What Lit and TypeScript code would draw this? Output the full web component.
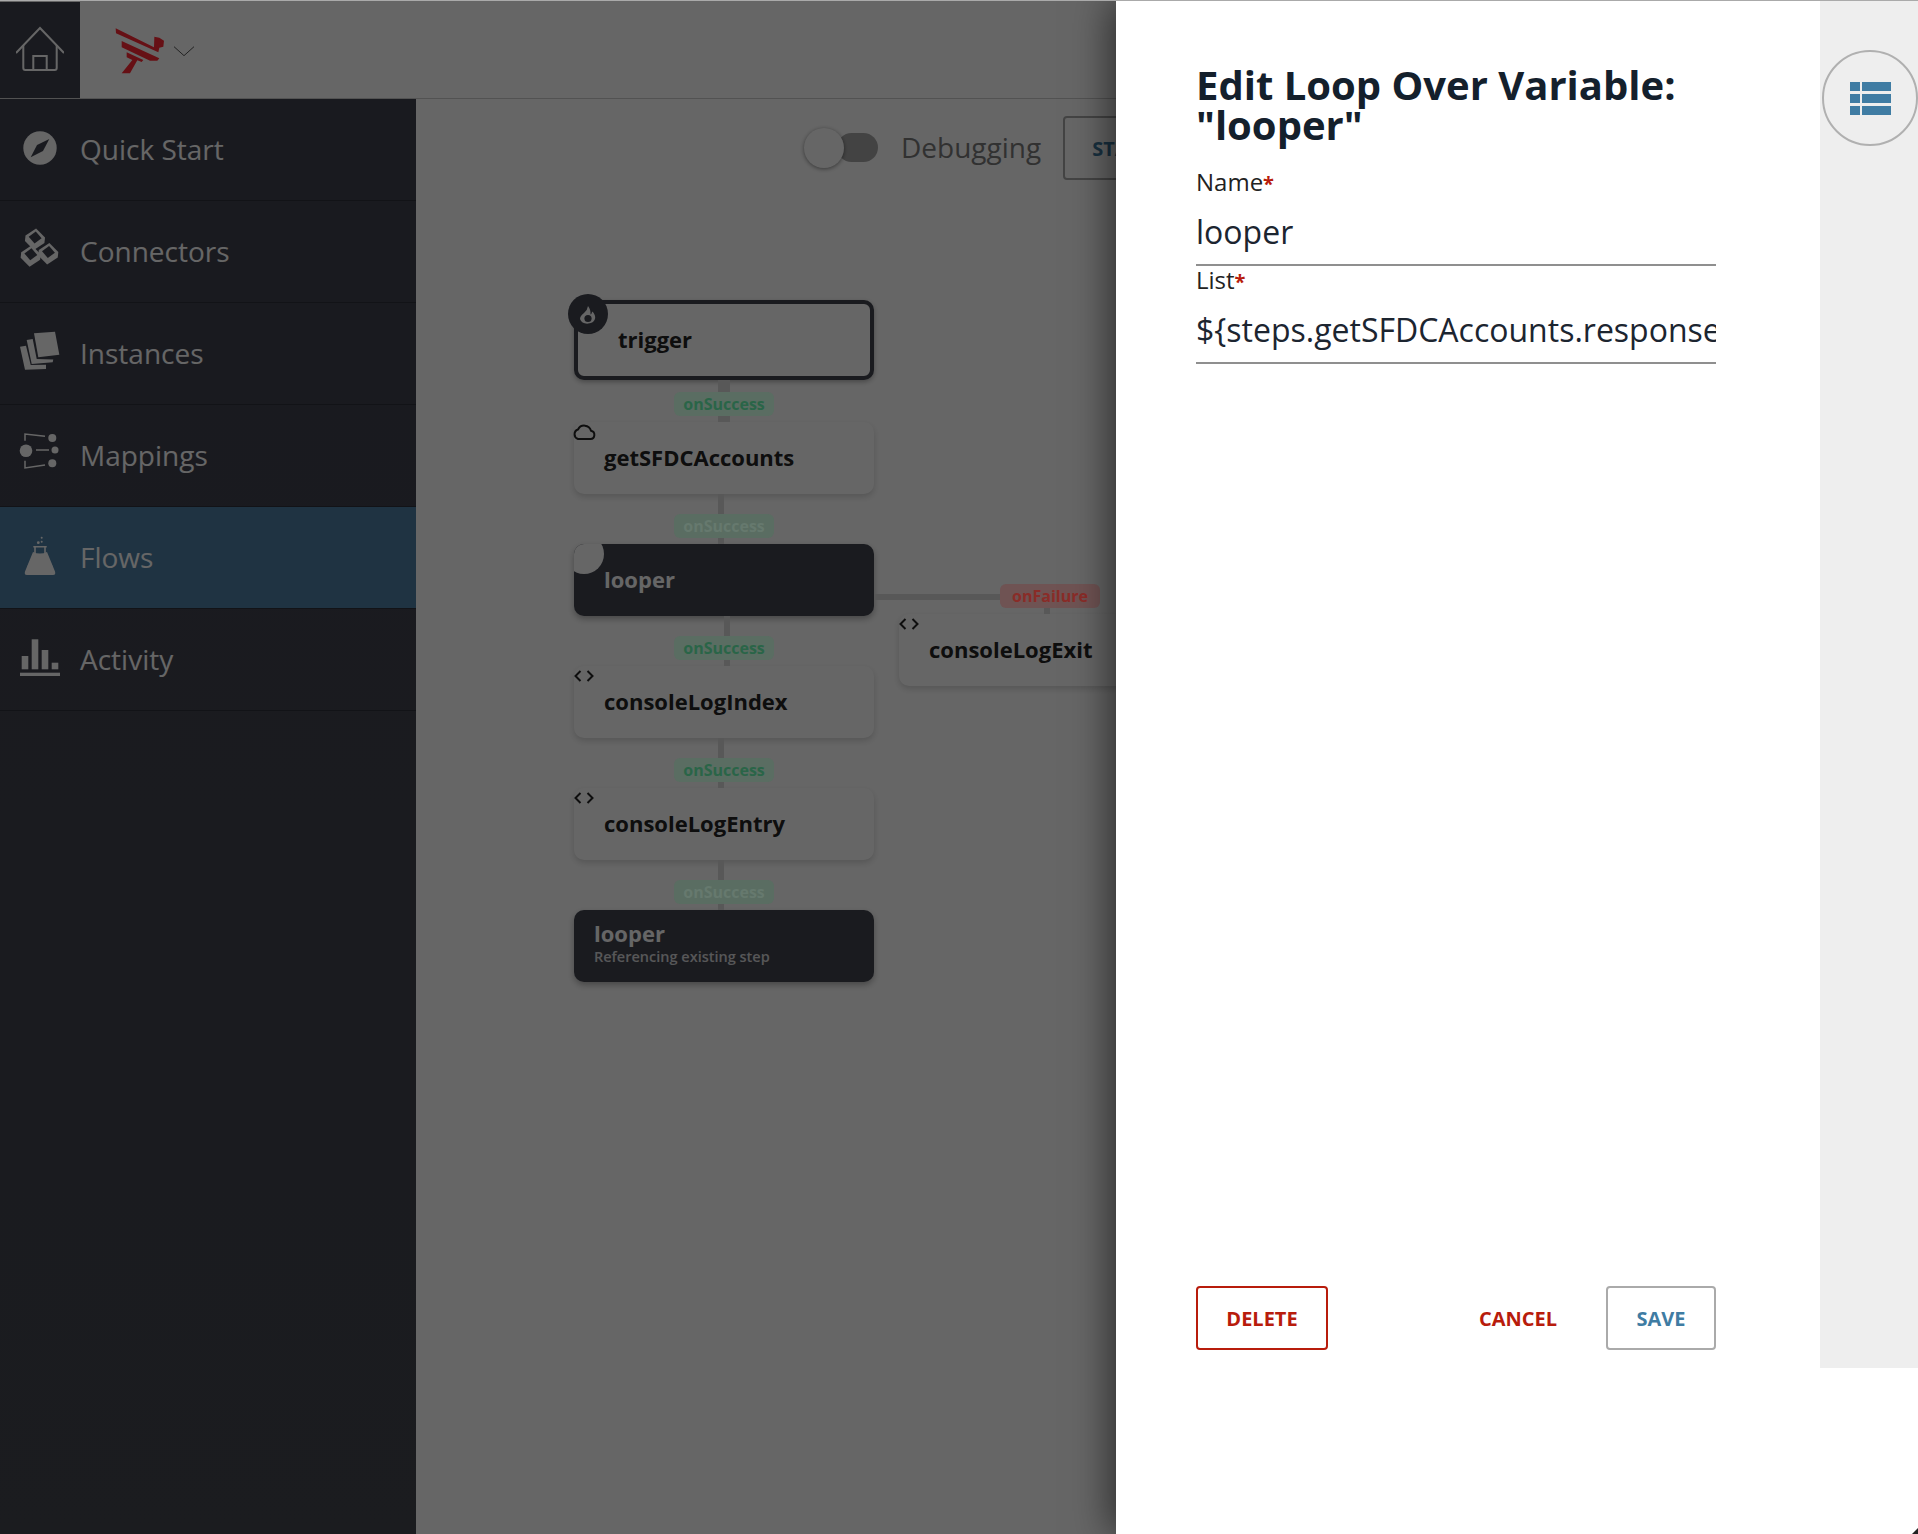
import { LitElement, html, css, svg } from "lit";
import { customElement } from "lit/decorators.js";

const ICONS: Record<string, unknown> = {
  compass: svg`<circle cx="24" cy="22" r="16.7" fill="#fff"/><polygon points="33.3,13 27,25 14.7,31.3 21,19" fill="#40434f"/>`,
  connectors: svg`${[[19, 11], [32.3, 25.5], [14.7, 27.7]].map(
    ([x, y]) => svg`<g transform="translate(${x} ${y}) rotate(6)"><polygon points="0,-10.5 9.8,-2.5 9.8,3 0,11 -9.8,3 -9.8,-2.5" fill="#fff"/><polygon points="0,-7.5 6.5,-1.5 0,4.5 -6.5,-1.5" fill="#40434f"/></g>`
  )}`,
  instances: svg`<g fill="#fff"><polygon points="18,3.3 39,1.7 43.3,24.7 22.3,27.3"/><polygon points="10.7,10 16.7,9 20.7,29 37.3,29.5 36.7,32.3 15.7,34"/><polygon points="4,16.7 10,15.7 14.7,35 30,34.7 30,39 9,39.7"/></g>`,
  mappings: svg`<g fill="#fff"><circle cx="10" cy="18.7" r="6.3"/><circle cx="36.3" cy="6" r="4"/><circle cx="39" cy="18" r="3.5"/><circle cx="36.3" cy="31.3" r="4"/></g><g fill="none" stroke="#fff" stroke-width="1.5"><path d="M9 8.7V2L29 4.3"/><path d="M9 28.7V36L29 33"/><path d="M20 18H33"/></g>`,
  flask: svg`<g fill="#fff"><circle cx="25.7" cy="3.7" r="1"/><circle cx="22.3" cy="8.7" r="1.4"/><circle cx="25.7" cy="7.7" r="1"/><path d="M17 18Q24 21 31 18L39 37.5Q40 41 37 41H11Q8 41 9 37.5Z"/></g><path d="M17.3 12.7H30.7M19 13V20L12 33M29 13V20L36 33" fill="none" stroke="#fff" stroke-width="1.6"/>`,
  activity: svg`<g fill="#fff"><rect x="5.7" y="20" width="6.6" height="13.3"/><rect x="15.7" y="3.3" width="6.6" height="30"/><rect x="25.7" y="14" width="6.6" height="19.3"/><rect x="35.7" y="26.7" width="6.6" height="6.6"/><rect x="4" y="36.7" width="40" height="3.3"/></g>`,
};

const NAV = [
  { label: "Quick Start", icon: "compass" },
  { label: "Connectors", icon: "connectors" },
  { label: "Instances", icon: "instances" },
  { label: "Mappings", icon: "mappings" },
  { label: "Flows", icon: "flask", active: true },
  { label: "Activity", icon: "activity" },
];

// Diagram coordinates: page position of each item on the flow canvas.
const OX = 416;
const OY = 99;
const NODES = [
  { label: "trigger", x: 574, y: 300, h: 80, kind: "trigger" },
  { label: "getSFDCAccounts", x: 574, y: 422, h: 72, icon: "cloud" },
  { label: "looper", x: 574, y: 544, h: 72, kind: "loop" },
  { label: "consoleLogIndex", x: 574, y: 666, h: 72, icon: "code" },
  { label: "consoleLogEntry", x: 574, y: 788, h: 72, icon: "code" },
  { label: "looper", x: 574, y: 910, h: 72, kind: "ref", sub: "Referencing existing step" },
  { label: "consoleLogExit", x: 899, y: 614, h: 72, icon: "code" },
];
const LINKS = [
  { x: 718, y: 380, w: 12, h: 42 },
  { x: 718, y: 494, w: 6, h: 50 },
  { x: 724, y: 616, w: 6, h: 50 },
  { x: 718, y: 738, w: 6, h: 50 },
  { x: 718, y: 860, w: 6, h: 50 },
  { x: 874, y: 594, w: 130, h: 6 },
  { x: 1044, y: 606, w: 6, h: 8 },
];
const BADGES = [
  { x: 674, y: 392, t: "onSuccess", c: "ok" },
  { x: 674, y: 514, t: "onSuccess", c: "ok pale" },
  { x: 674, y: 636, t: "onSuccess", c: "ok" },
  { x: 674, y: 758, t: "onSuccess", c: "ok" },
  { x: 674, y: 880, t: "onSuccess", c: "ok pale" },
  { x: 1000, y: 584, t: "onFailure", c: "bad" },
];

const pos = (x: number, y: number) => `left:${x - OX}px;top:${y - OY}px`;

@customElement("app-root")
export class AppRoot extends LitElement {
  static styles = css`
    :host {
      display: block;
      position: relative;
      width: 1918px;
      height: 1534px;
      overflow: hidden;
      background: #fff;
      font-family: "Open Sans", "Noto Sans", sans-serif;
      color: #222;
    }
    .shell { display: flex; flex-direction: column; height: 100%; }
    .header {
      display: flex; align-items: center; height: 99px; flex: none;
      box-sizing: border-box; padding-top: 2px; border-bottom: 1px solid #ccc;
    }
    .home {
      width: 80px; height: 96px; background: #40434f;
      display: flex; align-items: center; justify-content: center;
    }
    .logo { margin-left: 20px; display: block; }
    .body { flex: 1; display: flex; min-height: 0; }
    .side {
      width: 416px; flex: none;
      background: linear-gradient(#3f424f, #44464f);
    }
    .item {
      height: 102px; box-sizing: border-box; display: flex; align-items: center;
      padding: 0 0 2px 16px; gap: 16px; border-bottom: 1px solid #2f313a;
      color: #fff; font-size: 28px;
    }
    .item.active { background: #4e80a5; }
    .item svg { flex: none; display: block; margin-top: 2px; }
    .canvas { flex: 1; position: relative; min-width: 0; }
    .toolbar {
      display: flex; align-items: center; padding: 17px 0 0 388px; gap: 23px;
    }
    .toggle { position: relative; width: 74px; height: 40px; flex: none; }
    .track {
      position: absolute; left: 33px; top: 5px; width: 41px; height: 29px;
      border-radius: 15px; background: #a9a9a9;
    }
    .knob {
      position: absolute; left: 0; top: 0; width: 40px; height: 40px; border-radius: 50%;
      background: #fff; box-shadow: 0 1px 4px rgba(0,0,0,.45);
    }
    .dbg { font-size: 28px; color: #7c7c7c; line-height: 40px; margin-top: -2px; }
    .run {
      width: 170px; height: 64px; box-sizing: border-box; border: 2px solid #aaa; border-radius: 4px;
      background: transparent; font: 700 20px "Open Sans", sans-serif; color: #3f7ca3;
      text-align: left; padding-left: 27px; flex: none; margin-left: -1px;
    }
    .node {
      position: absolute; width: 300px; box-sizing: border-box; border-radius: 10px; background: #fff;
      box-shadow: 0 3px 6px rgba(0,0,0,.16); font-weight: 700; font-size: 22px; color: #242424;
      display: flex; flex-direction: column; justify-content: center; padding: 0 0 2px 30px;
    }
    .node.trigger { border: 4px solid #41444f; padding-left: 40px; padding-bottom: 3px; box-shadow: 0 2px 5px rgba(0,0,0,.3); }
    .node.loop, .node.ref { background: #41444f; color: #fff; overflow: hidden; box-shadow: 0 3px 6px rgba(0,0,0,.3); }
    .node.ref { padding: 0 0 6px 20px; line-height: 26px; }
    .sub { font-size: 14.5px; font-weight: 600; line-height: 20px; opacity: .8; margin-top: 1px; }
    .notch {
      position: absolute; left: -10px; top: -10px; width: 40px; height: 40px;
      border-radius: 50%; background: #fff;
    }
    .marker { position: absolute; display: block; }
    .fire { position: absolute; display: block; }
    .link { position: absolute; background: #585858; }
    .link.side-link { background: #585858; }
    .badge {
      position: absolute; width: 100px; height: 24px; border-radius: 6px;
      font-size: 16px; font-weight: 700; line-height: 24px; text-align: center;
    }
    .ok { background: #5a6d62; color: #2a6548; }
    .ok.pale { color: #66796e; }
    .bad { background: #6f5353; color: #8a2c28; }
    .veil { position: absolute; inset: 0; background: rgba(0,0,0,.6); }
    .panel {
      position: absolute; top: 0; right: 0; bottom: 0; width: 802px; background: #fff;
      display: flex; box-shadow: -6px 0 36px rgba(0,0,0,.55);
    }
    .form {
      width: 704px; box-sizing: border-box; padding: 65px 104px 184px 80px;
      display: flex; flex-direction: column;
    }
    h1 { margin: 0 0 23px; font-size: 40px; line-height: 40px; font-weight: 700; color: #14202c; }
    .field { display: block; }
    .lab { display: block; font-size: 24px; line-height: 27px; color: #222; }
    .lab b { color: #b81c0c; font-weight: 700; font-size: 20px; line-height: 0; }
    .val {
      height: 71px; box-sizing: border-box; border-bottom: 2px solid #8f8f8f; overflow: hidden;
      white-space: nowrap; font-size: 32px; line-height: 69px; padding-top: 2px; color: #1c2530;
    }
    .actions { margin-top: auto; display: flex; align-items: center; }
    .btn {
      height: 64px; box-sizing: border-box; border-radius: 4px; background: #fff; border: 2px solid transparent;
      font: 700 20px "Open Sans", sans-serif; padding: 0;
    }
    .del { width: 132px; border-color: #b81c0c; color: #b81c0c; }
    .cancel { width: 76px; margin-left: auto; color: #b81c0c; }
    .save { width: 110px; margin-left: 53px; border-color: #aaa; color: #3f7ca3; }
    .strip { width: 98px; height: 1368px; background: #eee; box-sizing: border-box; padding: 50px 0 0 2px; }
    .round {
      width: 96px; height: 96px; box-sizing: border-box; border-radius: 50%; border: 2px solid #b0b0b0;
      display: flex; align-items: center; justify-content: center;
    }
    .topline { position: absolute; left: 0; right: 0; top: 0; height: 1px; background: #aaa; }
    .corner {
      position: absolute; right: 0; bottom: 0; width: 6px; height: 6px; background: #222;
      clip-path: polygon(100% 0, 100% 100%, 0 100%);
    }
  `;

  private marker(kind: string) {
    if (kind === "cloud") {
      return html`<svg class="marker" style="left:-2px;top:2px" width="24" height="16" viewBox="0 0 24 16" fill="none" stroke="#242424" stroke-width="2"><path d="M6 15H18.5A4.2 4.2 0 0 0 19 6.7 7 7 0 0 0 6 5.5 5 5 0 0 0 6 15Z"/></svg>`;
    }
    return html`<svg class="marker" style="left:0;top:4px" width="20" height="12" viewBox="0 0 20 12" fill="none" stroke="#242424" stroke-width="2"><path d="M6.5 1L1.5 6L6.5 11M13.5 1L18.5 6L13.5 11"/></svg>`;
  }

  render() {
    return html`
      <div class="shell">
        <header class="header">
          <div class="home">
            <svg width="48" height="48" viewBox="0 0 48 48" fill="none" stroke="#fff" stroke-width="2"><path d="M0 27L24 2L48 27"/><path d="M7.3 19V42Q7.3 44 9.3 44H38.7Q40.7 44 40.7 42V19"/><path d="M17.3 44V30H30.7V44"/></svg>
          </div>
          <svg class="logo" width="110" height="70" viewBox="0 0 330 210">
            <g fill="#ff2a35">
              <polygon points="47,40 162,97 163,65 178,68 192,77 190,95 178,98 175,112 48,55"/>
              <polygon points="65,78 178,130 172,137 150,137 65,97"/>
              <polygon points="80,112 130,135 125,141 112,136 90,175 65,175 97,135 80,127"/>
            </g>
            <path d="M222 95L252 122L282 95" fill="none" stroke="#333" stroke-width="2.5"/>
          </svg>
        </header>
        <div class="body">
          <nav class="side">
            ${NAV.map(
              (n) => html`<div class="item ${n.active ? "active" : ""}">
                <svg width="48" height="48" viewBox="0 0 48 48">${ICONS[n.icon]}</svg>
                <span>${n.label}</span>
              </div>`
            )}
          </nav>
          <main class="canvas">
            <div class="toolbar">
              <div class="toggle"><div class="track"></div><div class="knob"></div></div>
              <span class="dbg">Debugging</span>
              <button class="run">START</button>
            </div>
            ${NODES.map(
              (n) => html`<div class="node ${n.kind ?? ""}" style="${pos(n.x, n.y)};height:${n.h}px">
                ${n.kind === "loop" ? html`<div class="notch"></div>` : ""}
                <div>${n.label}</div>
                ${n.sub ? html`<div class="sub">${n.sub}</div>` : ""}
                ${n.icon ? this.marker(n.icon) : ""}
              </div>`
            )}
            <svg class="fire" style="${pos(568, 294)}" width="40" height="40" viewBox="0 0 40 40">
              <circle cx="20" cy="20" r="20" fill="#41444f"/>
              <path d="M20 12Q19.5 16 16 19Q12 22 12 25A7.8 6.5 0 0 0 27.2 24Q27.2 20 24.2 17.5Q23.7 20 22.5 20.5Q23 16 20 12Z" fill="#fff"/>
              <circle cx="20" cy="24.5" r="3.6" fill="#41444f"/>
            </svg>
          </main>
        </div>
      </div>
      <div class="veil"></div>
      ${LINKS.map(
        (l) => html`<div class="link ${l.h < 10 ? "side-link" : ""}" style="left:${l.x}px;top:${l.y}px;width:${l.w}px;height:${l.h}px"></div>`
      )}
      ${BADGES.map((b) => html`<div class="badge ${b.c}" style="left:${b.x}px;top:${b.y}px">${b.t}</div>`)}
      <aside class="panel">
        <section class="form">
          <h1>Edit Loop Over Variable: "looper"</h1>
          <div class="field"><span class="lab">Name<b>*</b></span><div class="val">looper</div></div>
          <div class="field"><span class="lab">List<b>*</b></span><div class="val">\${steps.getSFDCAccounts.response.records}</div></div>
          <div class="actions">
            <button class="btn del">DELETE</button>
            <button class="btn cancel">CANCEL</button>
            <button class="btn save">SAVE</button>
          </div>
        </section>
        <div class="strip">
          <div class="round">
            <svg width="41" height="33" viewBox="0 0 41 33" fill="#3f7ca3"><rect width="10" height="9"/><rect x="12" width="29" height="9"/><rect y="12" width="10" height="9"/><rect x="12" y="12" width="29" height="9"/><rect y="24" width="10" height="9"/><rect x="12" y="24" width="29" height="9"/></svg>
          </div>
        </div>
      </aside>
      <div class="topline"></div>
      <div class="corner"></div>
    `;
  }
}
